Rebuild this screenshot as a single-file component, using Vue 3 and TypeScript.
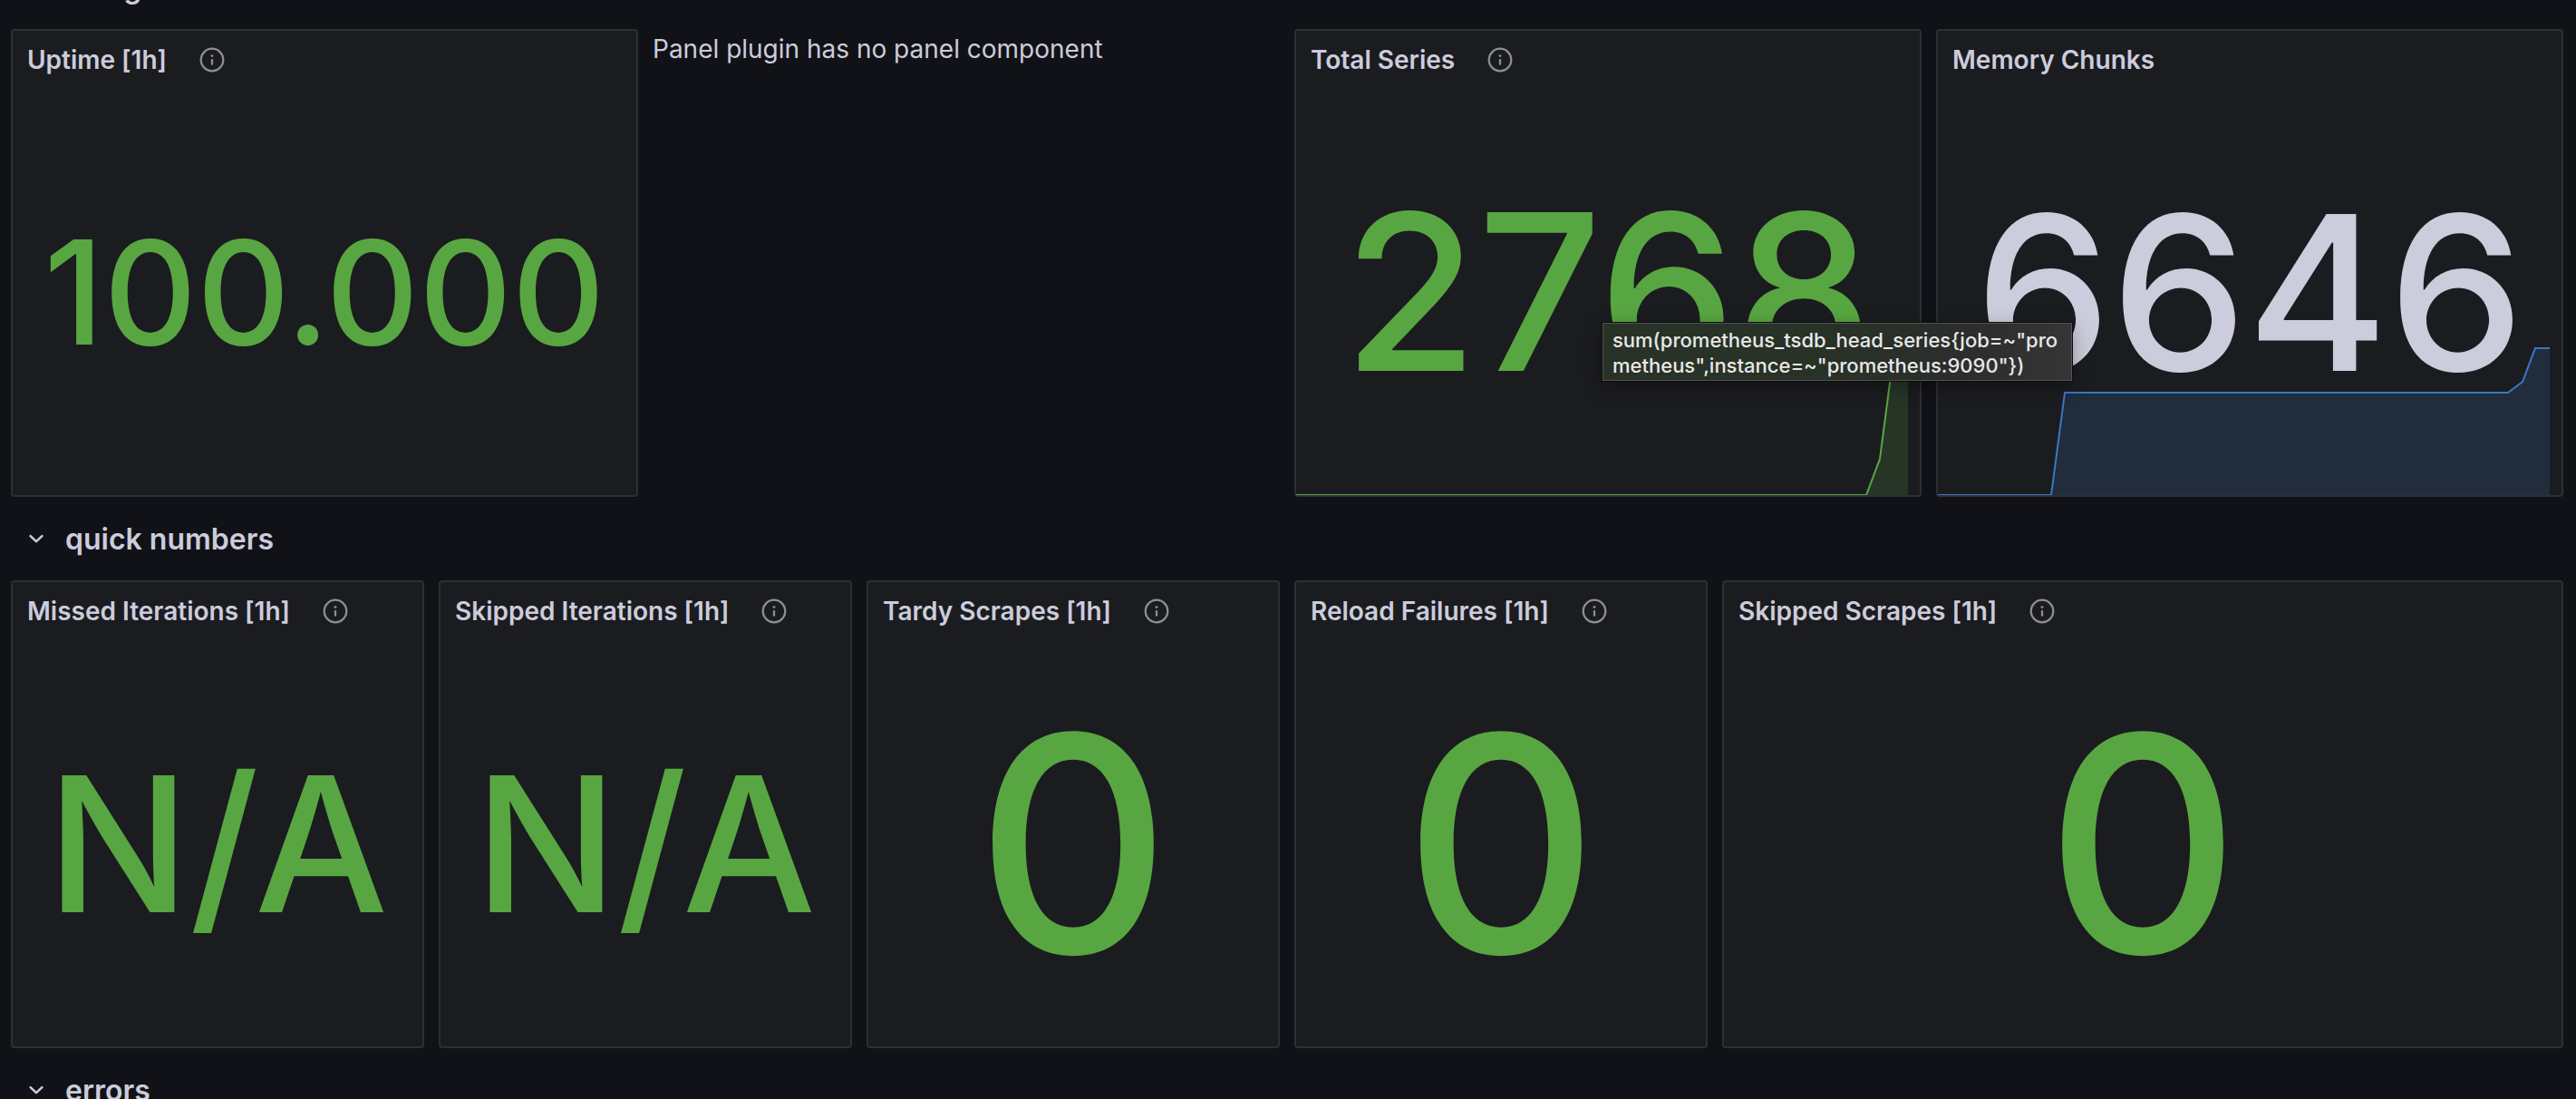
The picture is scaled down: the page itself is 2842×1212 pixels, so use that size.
<script setup lang="ts">
interface Panel {
  title?: string
  info?: boolean
  value?: string
  size?: 'sm' | 'md' | 'lg' | 'xl' | 'xxl'
  tone?: 'green' | 'plain'
  message?: string
  wide?: boolean
  spark?: { line: string; color: 'green' | 'blue' }
  tooltip?: string[]
}

interface Row {
  title: string
  columns: 'four' | 'six'
  panels: Panel[]
}

const rows: Row[] = [
  {
    title: 'at a glance',
    columns: 'four',
    panels: [
      { title: 'Uptime [1h]', info: true, value: '100.000', size: 'sm', tone: 'green' },
      { message: 'Panel plugin has no panel component' },
      {
        title: 'Total Series',
        info: true,
        value: '2768',
        size: 'xl',
        tone: 'green',
        spark: { line: '0,164 629,164 644,124 660,2 675,2', color: 'green' },
        tooltip: ['sum(prometheus_tsdb_head_series{job=~"pro', 'metheus",instance=~"prometheus:9090"})'],
      },
      {
        title: 'Memory Chunks',
        value: '6646',
        size: 'lg',
        tone: 'plain',
        spark: { line: '0,164 125,164 140,51 629,51 645,39 659,2 675,2', color: 'blue' },
      },
    ],
  },
  {
    title: 'quick numbers',
    columns: 'six',
    panels: [
      { title: 'Missed Iterations [1h]', info: true, value: 'N/A', size: 'md', tone: 'green' },
      { title: 'Skipped Iterations [1h]', info: true, value: 'N/A', size: 'md', tone: 'green' },
      { title: 'Tardy Scrapes [1h]', info: true, value: '0', size: 'xxl', tone: 'green' },
      { title: 'Reload Failures [1h]', info: true, value: '0', size: 'xxl', tone: 'green' },
      { title: 'Skipped Scrapes [1h]', info: true, value: '0', size: 'xxl', tone: 'green', wide: true },
    ],
  },
  { title: 'errors', columns: 'four', panels: [] },
]
</script>

<template>
  <main class="viewport">
    <div class="dashboard">
      <template v-for="row in rows" :key="row.title">
        <button class="row-header" type="button" aria-expanded="true">
          <svg class="chevron" viewBox="0 0 24 24" aria-hidden="true">
            <path d="M7.2 9.8 12 14.4 16.8 9.8" />
          </svg>
          <span>{{ row.title }}</span>
        </button>

        <div v-if="row.panels.length" class="row-grid" :class="row.columns">
          <template v-for="(panel, i) in row.panels" :key="i">
            <p v-if="panel.message" class="message">{{ panel.message }}</p>
            <section v-else class="panel" :class="{ wide: panel.wide }">
              <header class="panel-header">
                <h2>{{ panel.title }}</h2>
                <button v-if="panel.info" class="info" type="button" :aria-label="`About ${panel.title}`">
                  <svg viewBox="0 0 24 24" aria-hidden="true">
                    <circle class="ring" cx="12" cy="12" r="9.2" />
                    <circle class="dot" cx="12" cy="8.7" r="1.1" />
                    <path class="stem" d="M12 12.1v3.4" />
                  </svg>
                </button>
              </header>
              <svg
                v-if="panel.spark"
                class="spark"
                :class="panel.spark.color"
                viewBox="0 0 688 164"
                preserveAspectRatio="none"
                aria-hidden="true"
              >
                <polygon :points="`${panel.spark.line} 675,164 0,164`" />
                <polyline :points="panel.spark.line" />
              </svg>
              <div class="value" :class="[panel.size, panel.tone]">{{ panel.value }}</div>
              <div v-if="panel.tooltip" class="tooltip" role="tooltip">
                <div v-for="line in panel.tooltip" :key="line">{{ line }}</div>
              </div>
            </section>
          </template>
        </div>
      </template>
    </div>
  </main>
</template>

<style>
body {
  margin: 0;
  background: #111217;
}
</style>

<style scoped>
.viewport {
  height: 100vh;
  overflow: hidden;
  background: #111217;
  color: #ccccdc;
  font-family: Inter, "Liberation Sans", sans-serif;
  font-size: 28px;
}

/* The dashboard is scrolled part of the way past its first row header. */
.dashboard {
  display: flex;
  flex-direction: column;
  gap: 16px;
  margin-top: -44px;
  padding: 0 14px 0 12px;
}

button {
  border: 0;
  padding: 0;
  background: none;
  color: inherit;
  font: inherit;
  cursor: pointer;
}

.row-header {
  display: flex;
  align-items: center;
  align-self: flex-start;
  gap: 16px;
  height: 60px;
  padding-left: 12px;
  font-size: 32px;
  font-weight: 600;
}

.chevron {
  width: 32px;
  height: 32px;
  fill: none;
  stroke: currentColor;
  stroke-width: 1.9;
  stroke-linecap: round;
  stroke-linejoin: round;
}

.row-grid {
  display: grid;
  gap: 16px;
  grid-auto-rows: 516px;
}

.four {
  grid-template-columns: repeat(4, minmax(0, 1fr));
}

.six {
  grid-template-columns: repeat(6, minmax(0, 1fr));
}

.wide {
  grid-column: span 2;
}

.message {
  margin: 0;
  line-height: 44px;
}

.panel {
  position: relative;
  display: flex;
  flex-direction: column;
  box-sizing: border-box;
  border: 2px solid #2e2f34;
  border-radius: 4px;
  background: #1b1c20;
}

.panel-header {
  display: flex;
  align-items: center;
  gap: 34px;
  height: 64px;
  padding: 0 16px;
}

.panel-header h2 {
  margin: 0;
  font-size: 28px;
  font-weight: 600;
  white-space: nowrap;
}

.info {
  width: 32px;
  height: 32px;
  color: #8e8e99;
}

.info svg {
  display: block;
}

.ring,
.stem {
  fill: none;
  stroke: currentColor;
  stroke-width: 1.7;
  stroke-linecap: round;
}

.dot {
  fill: currentColor;
}

.spark {
  position: absolute;
  left: 0;
  bottom: 0;
  width: 100%;
  height: 164px;
}

.spark polyline {
  fill: none;
  stroke-width: 2;
}

.spark.green polyline {
  stroke: #58a641;
}

.spark.green polygon {
  fill: #273527;
}

.spark.blue polyline {
  stroke: #3a77c2;
}

.spark.blue polygon {
  fill: #212c3d;
}

.value {
  position: relative;
  display: flex;
  flex: 1;
  align-items: center;
  justify-content: center;
  font-weight: 500;
  line-height: 1;
}

.value.green {
  color: #58a641;
}

.value.plain {
  color: #ccccdc;
}

.sm {
  font-size: 159px;
}

.md {
  font-size: 208px;
}

.lg {
  font-size: 238px;
}

.xl {
  font-size: 240px;
}

.xxl {
  font-size: 332px;
}

.tooltip {
  position: absolute;
  z-index: 1;
  top: 322px;
  left: 338px;
  box-sizing: border-box;
  width: 518px;
  padding: 4px 10px 2px;
  border: 1px solid #53564f;
  outline: 1px solid #0c0c0e;
  background: linear-gradient(90deg, #283226 0%, #283226 45%, #2c2d2c 78%, #353537 100%);
  box-shadow: 0 6px 20px rgba(0, 0, 0, 0.35);
  color: #e8e8e8;
  font-size: 22px;
  font-weight: 500;
  line-height: 28px;
  white-space: nowrap;
}
</style>
